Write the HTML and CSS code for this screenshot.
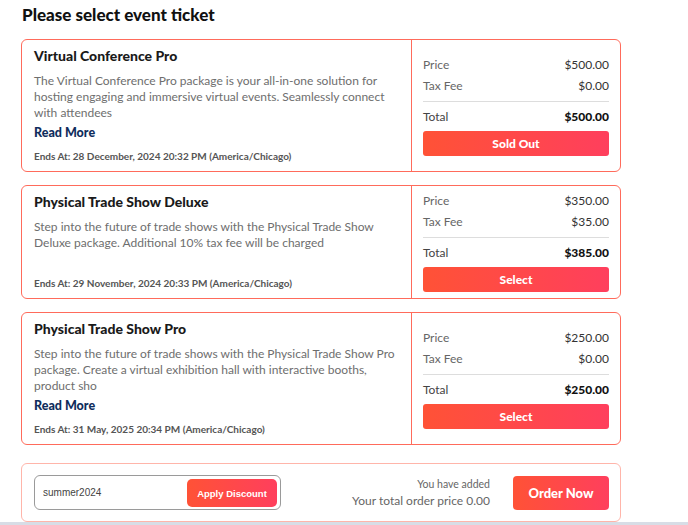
FILE: index.html
```html
<!DOCTYPE html>
<html lang="en">
<head>
    <meta charset="UTF-8">
    <title>Select event ticket</title>
    <meta name="viewport" content="width=device-width, initial-scale=1.0">
    <link rel="stylesheet" href="styles.css">
</head>
<body>
    <div class="page">
        <h2 class="page-title">Please select event ticket</h2>

        <div class="ticket">
            <div class="ticket-info">
                <h3>Virtual Conference Pro</h3>
                <p class="desc">The Virtual Conference Pro package is your all-in-one solution for hosting engaging and immersive virtual events. Seamlessly connect with attendees</p>
                <a class="read-more" href="#">Read More</a>
                <div class="ends">Ends At: 28 December, 2024 20:32 PM (America/Chicago)</div>
            </div>
            <div class="ticket-price">
                <div class="row"><span>Price</span><span class="val">$500.00</span></div>
                <div class="row"><span>Tax Fee</span><span class="val">$0.00</span></div>
                <div class="row total"><span>Total</span><span class="val">$500.00</span></div>
                <button class="btn">Sold Out</button>
            </div>
        </div>

        <div class="ticket">
            <div class="ticket-info">
                <h3>Physical Trade Show Deluxe</h3>
                <p class="desc">Step into the future of trade shows with the Physical Trade Show Deluxe package. Additional 10% tax fee will be charged</p>
                <div class="ends">Ends At: 29 November, 2024 20:33 PM (America/Chicago)</div>
            </div>
            <div class="ticket-price">
                <div class="row"><span>Price</span><span class="val">$350.00</span></div>
                <div class="row"><span>Tax Fee</span><span class="val">$35.00</span></div>
                <div class="row total"><span>Total</span><span class="val">$385.00</span></div>
                <button class="btn">Select</button>
            </div>
        </div>

        <div class="ticket">
            <div class="ticket-info">
                <h3>Physical Trade Show Pro</h3>
                <p class="desc">Step into the future of trade shows with the Physical Trade Show Pro package. Create a virtual exhibition hall with interactive booths, product sho</p>
                <a class="read-more" href="#">Read More</a>
                <div class="ends">Ends At: 31 May, 2025 20:34 PM (America/Chicago)</div>
            </div>
            <div class="ticket-price">
                <div class="row"><span>Price</span><span class="val">$250.00</span></div>
                <div class="row"><span>Tax Fee</span><span class="val">$0.00</span></div>
                <div class="row total"><span>Total</span><span class="val">$250.00</span></div>
                <button class="btn">Select</button>
            </div>
        </div>

        <div class="order">
            <div class="discount">
                <input type="text" value="summer2024">
                <button class="btn-discount">Apply Discount</button>
            </div>
            <div class="summary">
                <div class="added">You have added</div>
                <div class="sum">Your total order price 0.00</div>
            </div>
            <button class="btn-order">Order Now</button>
        </div>
    </div>
    <div class="bottom-bar"></div>
</body>
</html>
```

FILE: styles.css
```css
body { margin: 0; padding: 0; background: #fff; font-family: Lato, "Open Sans", sans-serif; color: #222; }
.page { width: 600px; padding: 0 0 0 21px; }
.page-title { margin: 0; padding: 4px 0 0 1px; height: 35px; font-size: 17px; font-weight: 900; color: #111; line-height: 22px; }

.ticket { display: flex; border: 1.5px solid #ff6b5b; border-radius: 6px; margin-bottom: 13px; }
.ticket:nth-of-type(3) { margin-bottom: 18px; }
.ticket-info { flex: 1; display: flex; flex-direction: column; padding: 6px 12px 8px 12px; border-right: 1.5px solid #ff6b5b; }
.ticket-info h3 { margin: 0; font-size: 14px; line-height: 20px; color: #1a1a1a; font-weight: 900; }
.desc { margin: 7px 0 0; font-size: 12px; line-height: 16px; color: #6e6e6e; }
.read-more { margin-top: 3px; font-size: 12.5px; font-weight: 900; color: #0f2d5c; text-decoration: none; line-height: 18px; }
.ends { margin-top: auto; padding-top: 7px; font-size: 10px; font-weight: 700; color: #555; line-height: 14px; }

.ticket-price { width: 186px; padding: 4px 11px 6px 11px; display: flex; flex-direction: column; justify-content: center; }
.row { display: flex; justify-content: space-between; font-size: 12px; line-height: 21px; color: #666; }
.row .val { color: #333; }
.row.total { border-top: 1.5px solid #ddd; margin-top: 5px; padding-top: 4px; color: #444; }
.row.total .val { font-weight: 900; color: #111; }
.btn { margin-top: 4px; height: 25px; border: none; border-radius: 3px; background: linear-gradient(90deg, #ff5236, #ff3f5d); color: #fff; font-family: inherit; font-size: 12px; font-weight: 900; }

.order { display: flex; align-items: center; border: 1.5px solid #ffb5aa; border-radius: 6px; padding: 11px 11px 11px 12px; }
.discount { position: relative; width: 247px; height: 35px; }
.discount input { box-sizing: border-box; width: 100%; height: 100%; border: 1.5px solid #9a9a9a; border-radius: 6px; padding: 0 8px; font-family: "Liberation Sans", Arial, sans-serif; font-size: 10px; color: #444; outline: none; }
.btn-discount { position: absolute; top: 4px; right: 4px; width: 90px; height: 28px; border: none; border-radius: 5px; background: linear-gradient(90deg, #ff5236, #ff3f5d); color: #fff; font-family: "Liberation Sans", Arial, sans-serif; font-size: 9.5px; font-weight: 700; }
.summary { flex: 1; text-align: right; padding-right: 23px; color: #666; }
.added { font-size: 10.5px; line-height: 16px; }
.sum { font-size: 12px; line-height: 18px; }
.btn-order { width: 96px; height: 34px; border: none; border-radius: 4px; background: linear-gradient(90deg, #ff5236, #ff3f5d); color: #fff; font-family: inherit; font-size: 13px; font-weight: 900; }

.bottom-bar { height: 3px; background: #d8dde6; }
```
